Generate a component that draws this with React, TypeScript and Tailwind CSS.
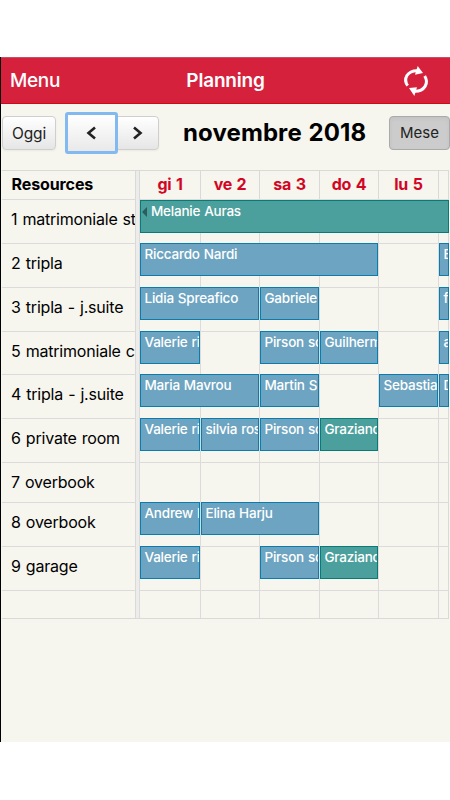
type Booking = {
  name: string;
  span: string;
  color?: "green";
  continued?: boolean;
};

type Resource = {
  title: string;
  height: string;
  bookings: Booking[];
};

const days = ["gi 1", "ve 2", "sa 3", "do 4", "lu 5", ""];

const dayStarts = [
  "col-start-1",
  "col-start-2",
  "col-start-3",
  "col-start-4",
  "col-start-5",
  "col-start-6",
];

const dayGrid = "grid grid-cols-[61px_59px_60px_59px_60px_11px]";

const resources: Resource[] = [
  {
    title: "1 matrimoniale st",
    height: "h-[44px]",
    bookings: [{ name: "Melanie Auras", span: "col-start-1 col-span-6 mt-px", color: "green", continued: true }],
  },
  {
    title: "2 tripla",
    height: "h-[44px]",
    bookings: [
      { name: "Riccardo Nardi", span: "col-start-1 col-span-4" },
      { name: "E", span: "col-start-6 col-span-1" },
    ],
  },
  {
    title: "3 tripla - j.suite",
    height: "h-[44px]",
    bookings: [
      { name: "Lidia Spreafico", span: "col-start-1 col-span-2" },
      { name: "Gabriele", span: "col-start-3 col-span-1" },
      { name: "f", span: "col-start-6 col-span-1" },
    ],
  },
  {
    title: "5 matrimoniale c",
    height: "h-[43px]",
    bookings: [
      { name: "Valerie ri", span: "col-start-1 col-span-1" },
      { name: "Pirson so", span: "col-start-3 col-span-1" },
      { name: "Guilherm", span: "col-start-4 col-span-1" },
      { name: "a", span: "col-start-6 col-span-1" },
    ],
  },
  {
    title: "4 tripla - j.suite",
    height: "h-[44px]",
    bookings: [
      { name: "Maria Mavrou", span: "col-start-1 col-span-2" },
      { name: "Martin S", span: "col-start-3 col-span-1" },
      { name: "Sebastia", span: "col-start-5 col-span-1" },
      { name: "D", span: "col-start-6 col-span-1" },
    ],
  },
  {
    title: "6 private room",
    height: "h-[44px]",
    bookings: [
      { name: "Valerie ri", span: "col-start-1 col-span-1" },
      { name: "silvia ros", span: "col-start-2 col-span-1" },
      { name: "Pirson so", span: "col-start-3 col-span-1" },
      { name: "Graziano", span: "col-start-4 col-span-1", color: "green" },
    ],
  },
  { title: "7 overbook", height: "h-[40px]", bookings: [] },
  {
    title: "8 overbook",
    height: "h-[44px]",
    bookings: [
      { name: "Andrew I", span: "col-start-1 col-span-1" },
      { name: "Elina Harju", span: "col-start-2 col-span-2" },
    ],
  },
  {
    title: "9 garage",
    height: "h-[44px]",
    bookings: [
      { name: "Valerie ri", span: "col-start-1 col-span-1" },
      { name: "Pirson so", span: "col-start-3 col-span-1" },
      { name: "Graziano", span: "col-start-4 col-span-1", color: "green" },
    ],
  },
  { title: "", height: "h-[28px]", bookings: [] },
];

function RefreshIcon() {
  return (
    <svg viewBox="21 18 84 90" className="h-[30px] w-[28px] fill-none stroke-white">
      <path d="M38 77C23 56 38 32 66 32" strokeWidth="9" />
      <path d="M89 48C103 70 88 94 60 94" strokeWidth="9" />
      <path d="M68 18L84 39L60 44Z" className="fill-white stroke-none" />
      <path d="M58 108L42 84L66 82Z" className="fill-white stroke-none" />
    </svg>
  );
}

function BookingBar({ booking }: { booking: Booking }) {
  const color =
    booking.color === "green"
      ? "bg-[#4b9f9d] border-[#087b77]"
      : "bg-[#6da4c1] border-[#0b7dac]";

  return (
    <div
      className={`row-start-1 ml-px flex h-[33px] overflow-hidden border text-[13.5px] leading-[21px] font-medium tracking-[-0.22px] whitespace-nowrap text-white [word-spacing:0.6px] ${color} ${booking.span}`}
    >
      {booking.continued && (
        <svg viewBox="0 0 5 10" className="mt-[6px] ml-px h-[10px] w-[5px] fill-[#285f5d]">
          <path d="M5 0V10L0 5Z" />
        </svg>
      )}
      <span className={booking.continued ? "pl-1" : "pl-[3.5px]"}>{booking.name}</span>
    </div>
  );
}

export default function App() {
  return (
    <div className="h-[800px] w-[450px] overflow-hidden bg-white pt-[57px] font-['Inter',sans-serif] text-black">
      <div className="h-[685px] border-l border-black bg-[#f6f5ee]">
        <header className="grid h-[47px] grid-cols-3 items-center border-t border-b border-t-[#c75063] border-b-[#d00a12] bg-[#d6213d] text-white">
          <span className="pl-[9px] text-[19px] leading-6 font-medium tracking-[-0.35px]">Menu</span>
          <h1 className="text-center text-[19px] leading-6 font-semibold tracking-[-0.2px]">Planning</h1>
          <div className="flex justify-end pr-5">
            <RefreshIcon />
          </div>
        </header>

        <div className="flex h-[66px] pt-[12px]">
          <button className="ml-px h-[34px] w-[54px] rounded border border-[#cfcfcf] bg-gradient-to-b from-white to-[#e6e6e6] pt-px text-[15.5px] tracking-[-0.1px] text-[#222] shadow-xs">
            Oggi
          </button>
          <div className="ml-[9px] flex -mt-1 h-[42px]">
            <button className="z-10 flex w-[53px] items-center justify-center rounded-[3px] border-[3px] border-[#82b9f0] bg-gradient-to-b from-white to-[#e9e9e9]">
              <svg viewBox="0 0 10 14" className="mr-px h-[14px] w-[10px] fill-none stroke-[#222]" strokeWidth="2.6">
                <path d="M9 1.5L2.5 7L9 12.5" />
              </svg>
            </button>
            <button className="mt-1 -ml-px flex h-[34px] w-[42px] items-center justify-center rounded-r border border-[#cfcfcf] bg-gradient-to-b from-white to-[#e6e6e6] shadow-xs">
              <svg viewBox="0 0 10 14" className="h-[14px] w-[10px] fill-none stroke-[#222]" strokeWidth="2.6">
                <path d="M1 1.5L7.5 7L1 12.5" />
              </svg>
            </button>
          </div>
          <h2 className="ml-[24px] w-[184px] text-[24px] leading-[33px] font-bold tracking-[0.1px] whitespace-nowrap [word-spacing:1px]">
            novembre 2018
          </h2>
          <button className="ml-[22px] h-[34px] w-[61px] shrink-0 rounded border border-[#aaa] bg-[#cccccc] pt-px text-[15px] text-[#222] inset-shadow-sm">
            Mese
          </button>
        </div>

        <div className="ml-px flex">
          <div className="w-[134px] shrink-0 overflow-hidden border-r border-b border-[#d9d9d9]">
            <div className="h-[29px] border-t border-[#d9d9d9] pl-[9.5px] text-[16px] leading-[26px] font-bold tracking-[-0.1px]">
              Resources
            </div>
            {resources.map((resource, i) => (
              <div
                key={i}
                className={`border-t border-[#dbdbdb] pl-[9px] text-[16px] leading-[38px] tracking-[-0.2px] whitespace-nowrap [word-spacing:0.8px] ${resource.height}`}
              >
                {resource.title}
              </div>
            ))}
          </div>
          <div className="w-[3px] shrink-0 border-t border-b border-[#d9d9d9] bg-[#ececeb]" />
          <div className="w-[310px] border-r border-b border-[#d9d9d9]">
            <div className={`h-[29px] ${dayGrid}`}>
              {days.map((day, i) => (
                <div
                  key={i}
                  className="border-t border-l border-[#d9d9d9] text-center text-[16px] leading-[26px] font-bold tracking-[-0.3px] text-[#d30525] [word-spacing:1.2px]"
                >
                  {day}
                </div>
              ))}
            </div>
            {resources.map((resource, i) => (
              <div key={i} className={`${dayGrid} ${resource.height}`}>
                {dayStarts.map((start) => (
                  <div key={start} className={`row-start-1 border-t border-l border-[#dbdbdb] ${start}`} />
                ))}
                {resource.bookings.map((booking) => (
                  <BookingBar key={booking.span} booking={booking} />
                ))}
              </div>
            ))}
          </div>
        </div>
      </div>
    </div>
  );
}
